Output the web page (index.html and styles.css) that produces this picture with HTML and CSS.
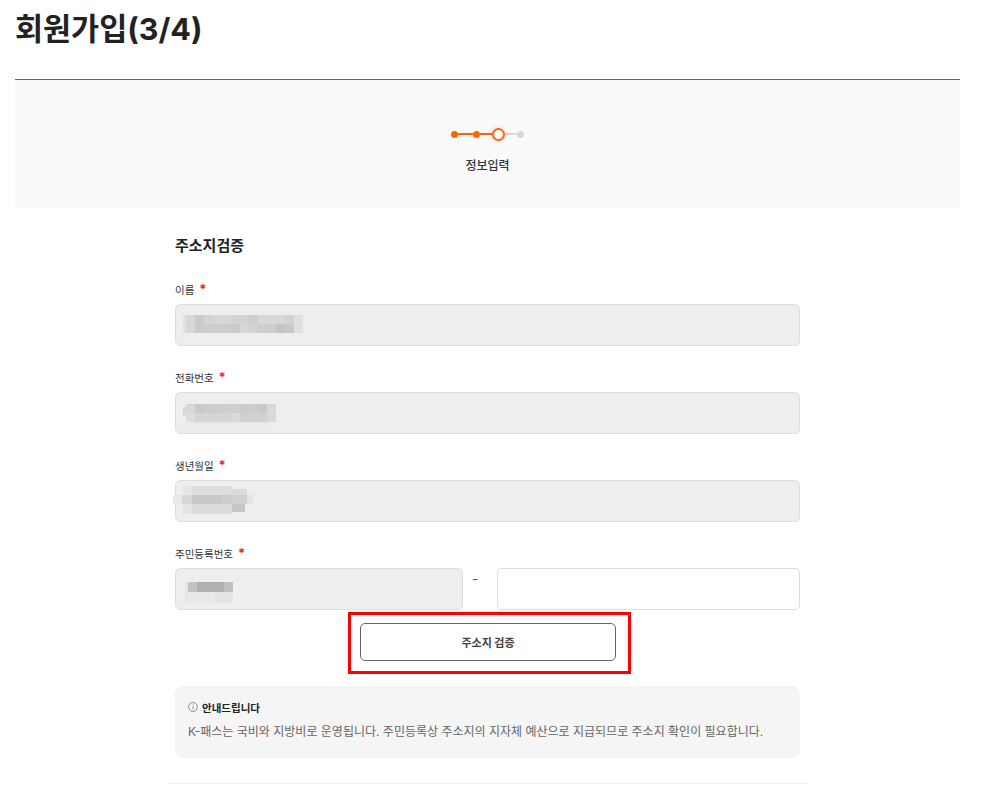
FILE: index.html
```html
<!DOCTYPE html>
<html lang="ko">
<head>
    <meta charset="UTF-8">
    <meta name="viewport" content="width=device-width, initial-scale=1.0">
    <title>회원가입(3/4)</title>
    <link rel="stylesheet" href="styles.css">
</head>
<body>

    <div class="page">
        <h1 class="page-title">회원가입(3/4)</h1>

        <div class="step-box">
            <div class="steps">
                <span class="step-dot done"></span>
                <span class="step-line done"></span>
                <span class="step-dot done"></span>
                <span class="step-line done short"></span>
                <span class="step-now"></span>
                <span class="step-line next short"></span>
                <span class="step-dot"></span>
            </div>
            <div class="step-name">정보입력</div>
        </div>

        <div class="form-wrap">
            <h2 class="form-title">주소지검증</h2>

            <div class="field">
                <label class="field-label">이름 <em>*</em></label>
                <div class="input locked">
                    <!-- masked value, blocks are in page coordinates -->
                    <svg class="mosaic" width="100%" height="40">
                        <g transform="translate(-176,-305)">
                            <rect x="183" y="315" width="3" height="18" fill="#e2e2e2"/>
                            <rect x="186" y="315" width="9" height="18" fill="#d8d8d8"/>
                            <rect x="195" y="315" width="9" height="18" fill="#cbcbcb"/>
                            <rect x="204" y="315" width="9" height="9" fill="#d3d3d3"/>
                            <rect x="213" y="315" width="18" height="9" fill="#d7d7d7"/>
                            <rect x="231" y="315" width="18" height="9" fill="#d2d2d2"/>
                            <rect x="249" y="315" width="9" height="9" fill="#cecece"/>
                            <rect x="258" y="315" width="27" height="9" fill="#d8d8d8"/>
                            <rect x="285" y="315" width="9" height="9" fill="#d2d2d2"/>
                            <rect x="204" y="324" width="27" height="9" fill="#cdcdcd"/>
                            <rect x="231" y="324" width="9" height="9" fill="#cacaca"/>
                            <rect x="240" y="324" width="9" height="9" fill="#d6d6d6"/>
                            <rect x="249" y="324" width="9" height="9" fill="#d2d2d2"/>
                            <rect x="258" y="324" width="18" height="9" fill="#cecece"/>
                            <rect x="276" y="324" width="9" height="9" fill="#c4c4c4"/>
                            <rect x="285" y="324" width="9" height="9" fill="#c9c9c9"/>
                            <rect x="294" y="315" width="9" height="18" fill="#e0e0e0"/>
                        </g>
                    </svg>
                </div>
            </div>

            <div class="field">
                <label class="field-label">전화번호 <em>*</em></label>
                <div class="input locked">
                    <svg class="mosaic" width="100%" height="40">
                        <g transform="translate(-176,-393)">
                            <rect x="183" y="422" width="87" height="3" fill="#e9e9e9"/>
                            <rect x="183" y="407" width="3" height="9" fill="#d8d8d8"/>
                            <rect x="186" y="404" width="9" height="9" fill="#d8d8d8"/>
                            <rect x="195" y="404" width="9" height="9" fill="#c9c9c9"/>
                            <rect x="204" y="404" width="18" height="9" fill="#cdcdcd"/>
                            <rect x="222" y="404" width="18" height="9" fill="#cfcfcf"/>
                            <rect x="240" y="404" width="9" height="9" fill="#cbcbcb"/>
                            <rect x="249" y="404" width="9" height="9" fill="#cecece"/>
                            <rect x="258" y="404" width="9" height="9" fill="#c9c9c9"/>
                            <rect x="267" y="404" width="9" height="18" fill="#d9d9d9"/>
                            <rect x="186" y="413" width="9" height="9" fill="#dcdcdc"/>
                            <rect x="195" y="413" width="36" height="9" fill="#d5d5d5"/>
                            <rect x="231" y="413" width="9" height="9" fill="#dbdbdb"/>
                            <rect x="240" y="413" width="27" height="9" fill="#d1d1d1"/>
                        </g>
                    </svg>
                </div>
            </div>

            <div class="field">
                <label class="field-label">생년월일 <em>*</em></label>
                <div class="input locked">
                    <svg class="mosaic" width="100%" height="40">
                        <g transform="translate(-176,-481)">
                            <rect x="173" y="495" width="9" height="9" fill="#e9e9e9"/>
                            <rect x="183" y="486" width="9" height="9" fill="#e6e6e6"/>
                            <rect x="192" y="486" width="40" height="9" fill="#dedede"/>
                            <rect x="232" y="489" width="15" height="6" fill="#dbdbdb"/>
                            <rect x="182" y="495" width="10" height="9" fill="#d8d8d8"/>
                            <rect x="192" y="495" width="30" height="9" fill="#c9c9c9"/>
                            <rect x="222" y="495" width="10" height="9" fill="#cdcdcd"/>
                            <rect x="232" y="495" width="15" height="9" fill="#d1d1d1"/>
                            <rect x="247" y="495" width="6" height="9" fill="#e4e4e4"/>
                            <rect x="183" y="504" width="9" height="10" fill="#e4e4e4"/>
                            <rect x="192" y="504" width="40" height="10" fill="#dcdcdc"/>
                            <rect x="232" y="504" width="13" height="8" fill="#c6c6c6"/>
                        </g>
                    </svg>
                </div>
            </div>

            <div class="field id-field">
                <label class="field-label">주민등록번호 <em>*</em></label>
                <div class="id-row">
                    <div class="input locked id-front">
                        <svg class="mosaic" width="100%" height="40">
                            <g transform="translate(-176,-569)">
                                <rect x="185" y="582" width="3" height="21" fill="#e6e6e6"/>
                                <rect x="188" y="582" width="9" height="10" fill="#c3c3c3"/>
                                <rect x="197" y="582" width="27" height="10" fill="#b0b0b0"/>
                                <rect x="224" y="582" width="9" height="10" fill="#c0c0c0"/>
                                <rect x="233" y="582" width="9" height="21" fill="#f0f0f0"/>
                                <rect x="188" y="592" width="27" height="11" fill="#e9e9e9"/>
                                <rect x="215" y="592" width="18" height="11" fill="#e4e4e4"/>
                            </g>
                        </svg>
                    </div>
                    <span class="dash">-</span>
                    <input class="input id-back" type="text">
                </div>
            </div>

            <div class="action">
                <button class="verify-btn" type="button">주소지 검증</button>
            </div>

            <div class="notice">
                <div class="notice-head">
                    <svg width="10" height="10" viewBox="0 0 10 10" fill="none" stroke="#777" stroke-width="0.8">
                        <circle cx="5" cy="5" r="4.4"/>
                        <path d="M5 4.4V7.4M5 2.6V3.4"/>
                    </svg>
                    <strong>안내드립니다</strong>
                </div>
                <p>K-패스는 국비와 지방비로 운영됩니다. 주민등록상 주소지의 지자체 예산으로 지급되므로 주소지 확인이 필요합니다.</p>
            </div>
        </div>

        <div class="bottom-line"></div>
    </div>

</body>
</html>
```

FILE: styles.css
```css
* {
    box-sizing: border-box;
}
body {
    font-family: Inter, "Noto Sans CJK KR", sans-serif;
    color: #222;
    background-color: white;
    margin: 0;
    padding: 0;
    height: 798px;
    overflow: hidden;
}
.page {
    width: 960px;
    padding-left: 15px;
}
.page-title {
    margin: 0;
    height: 80px;
    padding-top: 7px;
    font-size: 30.5px;
    line-height: 44px;
    font-weight: 700;
    border-bottom: 1px solid #666;
}
.step-box {
    height: 128px;
    background-color: #fafafa;
    padding-top: 47px;
    display: flex;
    flex-direction: column;
    align-items: center;
}
.steps {
    display: flex;
    align-items: center;
    height: 14px;
}
.step-dot {
    width: 7px;
    height: 7px;
    border-radius: 50%;
    background-color: #d9d9d9;
}
.step-dot.done {
    background-color: #ff6600;
}
.step-line {
    width: 15px;
    height: 2px;
    background-color: #ddd;
}
.step-line.done {
    background-color: #ff6600;
}
.step-line.next {
    background: linear-gradient(to right, #efc4ac, #dddddd);
}
.step-line.short {
    width: 12px;
}
.step-now {
    width: 13px;
    height: 13px;
    border-radius: 50%;
    border: 2.5px solid #ff6600;
    background-color: white;
    box-shadow: 0 0 4px rgba(90, 110, 220, 0.35);
}
.step-name {
    margin-top: 16px;
    font-size: 12px;
    line-height: 18px;
    font-weight: 500;
    color: #333;
}
.form-wrap {
    width: 625px;
    margin-left: 160px;
    padding-top: 27px;
}
.form-title {
    margin: 0 0 25px;
    font-size: 15px;
    line-height: 22px;
    font-weight: 700;
}
.field {
    margin-bottom: 24px;
}
.id-field {
    margin-bottom: 2px;
}
.field-label {
    display: block;
    height: 22px;
    font-size: 10.5px;
    line-height: 14px;
    color: #333;
}
.field-label em {
    font-style: normal;
    font-weight: 700;
    color: #f52222;
    font-size: 13px;
    margin-left: 2px;
}
.input {
    display: flex;
    align-items: center;
    width: 100%;
    height: 42px;
    padding: 0;
    border: 1px solid #ddd;
    border-radius: 5px;
    background-color: white;
}
.input.locked {
    background-color: #eeeeee;
}
.mosaic {
    display: block;
    overflow: visible;
}
.id-row {
    display: flex;
    align-items: center;
}
.id-front {
    width: 288px;
}
.dash {
    width: 34px;
    font-size: 13px;
    line-height: 20px;
    padding-left: 9px;
    margin-bottom: 20px;
    color: #555;
}
.id-back {
    flex: 1;
    width: auto;
    outline: none;
}
.action {
    width: 283px;
    height: 62px;
    margin-left: 173px;
    padding: 8px 9px 0;
    border: 3px solid #ff0000;
}
.verify-btn {
    display: block;
    width: 256px;
    height: 38px;
    padding: 0;
    border: 1px solid #666;
    border-radius: 5px;
    background-color: white;
    font-family: inherit;
    font-size: 11px;
    font-weight: 700;
    color: #444;
}
.notice {
    margin-top: 12px;
    height: 72px;
    padding: 12px 13px;
    background-color: #f5f5f5;
    border-radius: 8px;
}
.notice-head {
    display: flex;
    align-items: center;
    gap: 4px;
    height: 18px;
    font-size: 10.5px;
    color: #222;
}
.notice p {
    margin: 6px 0 0;
    font-size: 12px;
    line-height: 20px;
    color: #666;
}
.bottom-line {
    width: 640px;
    height: 1px;
    margin: 25px 0 0 153px;
    background-color: #eee;
}
```
